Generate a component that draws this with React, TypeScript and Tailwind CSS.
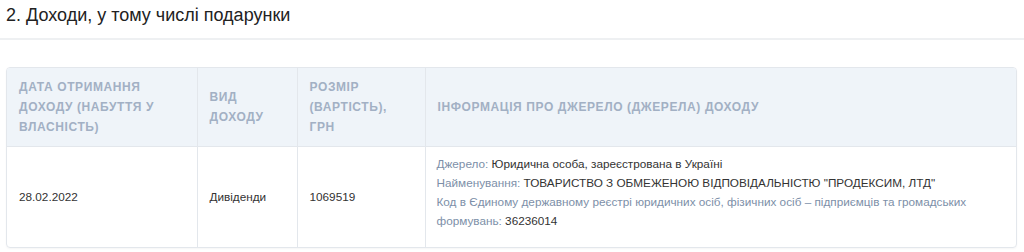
import React from 'react'

const headers = [
  { label: 'Дата отримання доходу (набуття у власність)', w: 'w-[190px]' },
  { label: 'Вид доходу', w: 'w-[100px]' },
  { label: 'Розмір (вартість), грн', w: 'w-[128px]' },
  { label: 'Інформація про джерело (джерела) доходу', w: '' },
]

const App: React.FC = () => {
  return (
    <div className="w-[1024px] h-[252px] bg-white font-['Liberation_Sans',Arial,sans-serif] overflow-hidden">
      <h2 className="px-[6px] pt-[2px] h-[38px] text-[18px] leading-[26px] text-[#222]">
        2. Доходи, у тому числі подарунки
      </h2>
      <div className="h-[2px] bg-[#eef0f2]" />

      <div className="mx-[6px] mt-[27px] w-[1011px] rounded-[4px] border border-[#e3e7ec] overflow-hidden shadow-[0_1px_2px_rgba(0,0,0,0.04)]">
        <table className="w-full border-collapse table-fixed">
          <thead>
            <tr className="bg-[#eff4f9] h-[78px]">
              {headers.map((h, i) => (
                <th
                  key={i}
                  className={`${h.w} px-[12px] text-left align-middle text-[12px] leading-[20px] font-bold uppercase tracking-[0.6px] text-[#a2b0c4] border-b border-[#e3e7ec] ${i > 0 ? 'border-l' : ''}`}
                >
                  {h.label}
                </th>
              ))}
            </tr>
          </thead>
          <tbody>
            <tr className="h-[101px] text-[11.75px] text-[#333]">
              <td className="px-[12px] align-middle">28.02.2022</td>
              <td className="px-[12px] align-middle border-l border-[#e3e7ec]">Дивіденди</td>
              <td className="px-[12px] align-middle border-l border-[#e3e7ec]">1069519</td>
              <td className="pl-[11px] pr-[12px] align-middle border-l border-[#e3e7ec] leading-[19px] pb-[10px]">
                <div>
                  <span className="text-[#7d8fa8]">Джерело: </span>Юридична особа, зареєстрована в Україні
                </div>
                <div>
                  <span className="text-[#7d8fa8]">Найменування: </span>ТОВАРИСТВО З ОБМЕЖЕНОЮ ВІДПОВІДАЛЬНІСТЮ "ПРОДЕКСИМ, ЛТД"
                </div>
                <div className="max-w-[540px]">
                  <span className="text-[#7d8fa8]">
                    Код в Єдиному державному реєстрі юридичних осіб, фізичних осіб – підприємців та громадських формувань:{' '}
                  </span>
                  36236014
                </div>
              </td>
            </tr>
          </tbody>
        </table>
      </div>
    </div>
  )
}

export default App
